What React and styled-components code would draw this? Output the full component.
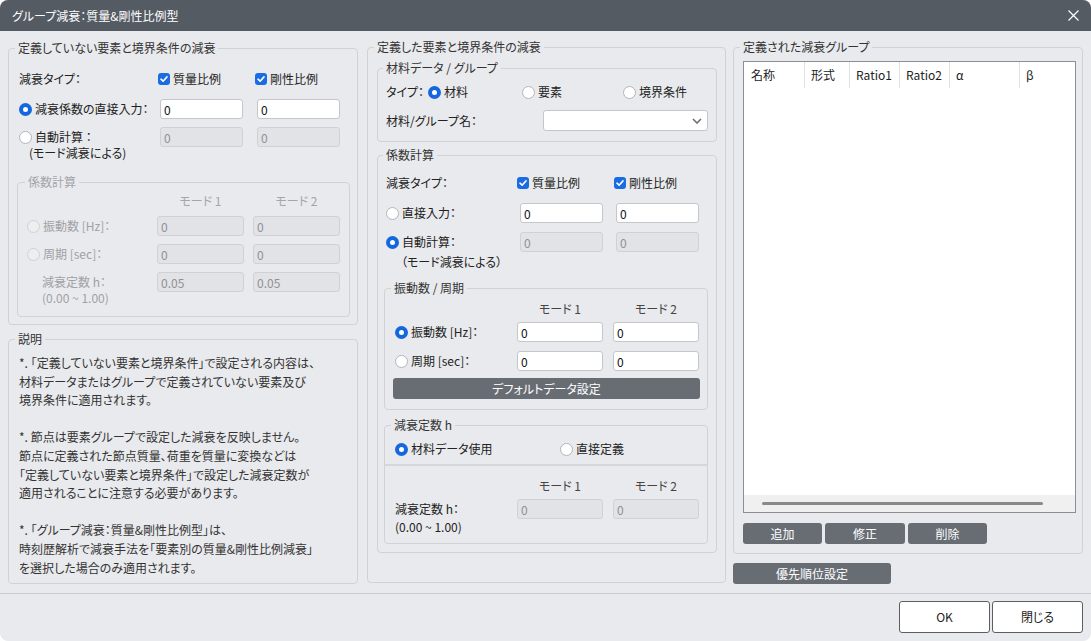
import React from "react";
import styled, { createGlobalStyle } from "styled-components";

const BG = "#e9eaed";
const LINE = "#d0d2d6";

const GlobalStyle = createGlobalStyle`
  *, *::before, *::after { box-sizing: border-box; }
  html, body { margin: 0; padding: 0; background: #ffffff; }
  body {
    font-family: "Noto Sans CJK JP", "Noto Sans", sans-serif;
    font-size: 12px;
    line-height: 16px;
    color: #222;
    font-feature-settings: "palt";
  }
`;

const Dialog = styled.div`
  width: 1091px;
  height: 641px;
  background: ${BG};
  border-radius: 8px;
  overflow: hidden;
  display: flex;
  flex-direction: column;
`;

const TitleBar = styled.header`
  flex: none;
  height: 31px;
  background: #555b63;
  color: #fff;
  display: flex;
  align-items: center;
  justify-content: space-between;
  padding: 0 12px;
  font-size: 12px;
`;

const CloseButton = styled.button`
  border: 0;
  background: transparent;
  padding: 0;
  width: 11px;
  height: 11px;
  display: flex;
  color: #fff;
`;

const Main = styled.main`
  flex: none;
  height: 563px;
  border-bottom: 1px solid #c9cbcf;
  display: flex;
  padding: 16px 8px 0 8px;
`;

const Column = styled.div`
  flex: none;
  width: ${(p) => p.$w}px;
  margin-left: ${(p) => p.$ml || 0}px;
  padding-top: ${(p) => p.$pt || 0}px;
  display: flex;
  flex-direction: column;
  align-items: flex-start;
`;

const Box = styled.section`
  flex: none;
  display: flex;
  flex-direction: column;
  align-items: flex-start;
  border: 1px solid ${LINE};
  border-radius: 4px;
  width: ${(p) => (p.$w ? `${p.$w}px` : "100%")};
  height: ${(p) => p.$h}px;
  margin: ${(p) => p.$m || "0"};
  padding: ${(p) => p.$p || "0"};
`;

const Legend = styled.div`
  flex: none;
  margin: -9px 0 0 ${(p) => p.$x || 0}px;
  padding: 0 3px;
  height: 16px;
  line-height: 16px;
  background: ${BG};
  white-space: nowrap;
  color: ${(p) => (p.$disabled ? "#a2a5aa" : "#333")};
`;

const Row = styled.div`
  flex: none;
  display: grid;
  grid-template-columns: ${(p) => p.$cols};
  align-items: ${(p) => p.$align || "center"};
  height: ${(p) => p.$h || 20}px;
  margin-top: ${(p) => p.$mt || 0}px;
  white-space: nowrap;
  color: ${(p) => (p.$disabled ? "#9ea1a6" : "#222")};
`;

const ModeHead = styled.div`
  width: ${(p) => p.$w}px;
  text-align: center;
  color: ${(p) => (p.$disabled ? "#a2a5aa" : "#444")};
`;

const Input = styled.input`
  width: ${(p) => p.$w}px;
  height: 20px;
  margin-left: ${(p) => p.$ml || 0}px;
  border: 1px solid ${(p) => (p.disabled ? "#cfd1d5" : "#c3c6cb")};
  border-radius: 3px;
  background: ${(p) => (p.disabled ? "#e1e3e6" : "#ffffff")};
  color: ${(p) => (p.disabled ? "#8e9196" : "#111")};
  font: inherit;
  line-height: 18px;
  padding: 0 3px;
  outline: none;
`;

const Choice = styled.label`
  display: inline-flex;
  align-items: center;
  gap: 3px;
  white-space: nowrap;
  line-height: ${(p) => p.$lh || 16}px;
  color: ${(p) => (p.$disabled ? "#9ea1a6" : "#222")};
`;

const RadioDot = styled.span`
  flex: none;
  width: 13px;
  height: 13px;
  border-radius: 50%;
  background: ${(p) => (p.$disabled ? "#eceef0" : "#ffffff")};
  border: ${(p) =>
    p.$on ? "4px solid #1467de" : `1px solid ${p.$disabled ? "#cfd1d4" : "#b2b5b9"}`};
`;

const CheckBoxMark = styled.span`
  flex: none;
  width: 12px;
  height: 12px;
  border-radius: 3px;
  background: #1a6ce2;
  display: flex;
  align-items: center;
  justify-content: center;
`;

const LabelStack = styled.div`
  display: flex;
  flex-direction: column;
  align-items: flex-start;
  padding-top: ${(p) => p.$pt || 0}px;
  color: ${(p) => (p.$disabled ? "#9ea1a6" : "#222")};
`;

const SubLine = styled.div`
  padding-left: ${(p) => p.$indent || 0}px;
  line-height: ${(p) => p.$lh || 16}px;
  white-space: nowrap;
`;

const Select = styled.div`
  width: 165px;
  height: 21px;
  background: #fff;
  border: 1px solid #c3c6cb;
  border-radius: 3px;
  display: flex;
  align-items: center;
  justify-content: flex-end;
  padding-right: 5px;
`;

const DarkButton = styled.button`
  flex: none;
  width: ${(p) => p.$w}px;
  height: 21px;
  margin: ${(p) => p.$m || "0"};
  border: 0;
  border-radius: 3px;
  background: #686d74;
  color: #fff;
  font: inherit;
  line-height: 21px;
  padding: 0;
`;

const ButtonRow = styled.div`
  display: flex;
  gap: 3px;
  margin-top: 10px;
`;

const Divided = styled.div`
  align-self: stretch;
  margin: 5px 0 0 -10px;
  padding-left: 10px;
  border-top: 2px solid #d5d7db;
  display: flex;
  flex-direction: column;
`;

const Notes = styled.div`
  margin-top: 7px;
  line-height: 18.6px;
  color: #333;
  white-space: nowrap;
`;

const NoteBlock = styled.p`
  margin: 0 0 18.6px 0;
  &:last-child { margin-bottom: 0; }
`;

const List = styled.div`
  flex: none;
  width: 333px;
  height: 452px;
  margin-top: 6px;
  background: #fff;
  border: 1px solid #8b8e93;
  display: flex;
  flex-direction: column;
`;

const ListHead = styled.div`
  display: grid;
  grid-template-columns: 61px 45px 50px 50px 70px 1fr;
  height: 26px;
`;

const HeadCell = styled.div`
  display: flex;
  align-items: center;
  padding-left: 6px;
  color: #222;
  border-right: 1px solid #e0e0e0;
  &:first-child { padding-left: 7px; }
  &:last-child { border-right: 0; }
`;

const ListBody = styled.div`
  flex: 1;
`;

const HScroll = styled.div`
  height: 17px;
  background: #f0f0f0;
  display: flex;
  align-items: center;
  padding: 0 32px 0 18px;
`;

const HThumb = styled.div`
  flex: 1;
  height: 3px;
  border-radius: 2px;
  background: #8a8a8a;
`;

const Footer = styled.footer`
  flex: 1;
  display: flex;
  justify-content: flex-end;
  align-items: flex-start;
  gap: 2px;
  padding: 7px 8px 0 0;
`;

const FooterButton = styled.button`
  width: 91px;
  height: 32px;
  background: #fff;
  border: 1px solid #5b5f64;
  border-radius: 3px;
  font: inherit;
  color: #222;
  padding: 0;
`;

function Radio({ on, disabled, children, lh }) {
  return (
    <Choice $disabled={disabled} $lh={lh}>
      <RadioDot $on={on} $disabled={disabled} />
      <span>{children}</span>
    </Choice>
  );
}

function Check({ children }) {
  return (
    <Choice>
      <CheckBoxMark>
        <svg width="10" height="10" viewBox="0 0 10 10">
          <path d="M2 5.2 L4.1 7.2 L8 2.9" fill="none" stroke="#fff" strokeWidth="1.6" strokeLinecap="round" strokeLinejoin="round" />
        </svg>
      </CheckBoxMark>
      <span>{children}</span>
    </Choice>
  );
}

const LEFT_SUB = "130px 96px 87px";
const MID_SUB = "122px 96px 86px";

export default function App() {
  return (
    <>
      <GlobalStyle />
      <Dialog>
        <TitleBar>
          <span>グループ減衰：質量&amp;剛性比例型</span>
          <CloseButton aria-label="close">
            <svg width="11" height="11" viewBox="0 0 11 11">
              <path d="M0.5 0.5 L10.5 10.5 M10.5 0.5 L0.5 10.5" stroke="#fff" strokeWidth="1.2" />
            </svg>
          </CloseButton>
        </TitleBar>

        <Main>
          {/* left column */}
          <Column $w={350} $pt={1}>
            <Box $h={277} $p="0 7px 0 10px">
              <Legend $x={-4}>定義していない要素と境界条件の減衰</Legend>
              <Row $cols="139px 97px 85px" $mt={13}>
                <span>減衰タイプ：</span>
                <Check>質量比例</Check>
                <Check>剛性比例</Check>
              </Row>
              <Row $cols="139px 97px 85px" $mt={10}>
                <Radio on>減衰係数の直接入力：</Radio>
                <Input $w={83} $ml={2} defaultValue="0" readOnly />
                <Input $w={83} $ml={2} defaultValue="0" readOnly />
              </Row>
              <Row $cols="139px 97px 85px" $mt={8} $h={34} $align="start">
                <LabelStack $pt={2}>
                  <Radio>自動計算 ：</Radio>
                  <SubLine $indent={10}>(モード減衰による)</SubLine>
                </LabelStack>
                <Input $w={83} $ml={2} defaultValue="0" disabled />
                <Input $w={83} $ml={2} defaultValue="0" disabled />
              </Row>

              <Box $w={333} $h={135} $m="21px 0 0 -2px" $p="0 0 0 9px">
                <Legend $x={-2} $disabled>係数計算</Legend>
                <Row $cols={LEFT_SUB} $mt={3} $h={16}>
                  <span />
                  <ModeHead $w={87} $disabled>モード 1</ModeHead>
                  <ModeHead $w={87} $disabled>モード 2</ModeHead>
                </Row>
                <Row $cols={LEFT_SUB} $mt={7} $disabled>
                  <Radio disabled>振動数 [Hz]：</Radio>
                  <Input $w={87} defaultValue="0" disabled />
                  <Input $w={87} defaultValue="0" disabled />
                </Row>
                <Row $cols={LEFT_SUB} $mt={8} $disabled>
                  <Radio disabled>周期 [sec]：</Radio>
                  <Input $w={87} defaultValue="0" disabled />
                  <Input $w={87} defaultValue="0" disabled />
                </Row>
                <Row $cols={LEFT_SUB} $mt={8} $h={34} $align="start">
                  <LabelStack $pt={2} $disabled>
                    <SubLine $indent={15}>減衰定数 h：</SubLine>
                    <SubLine $indent={15}>(0.00 ~ 1.00)</SubLine>
                  </LabelStack>
                  <Input $w={87} defaultValue="0.05" disabled />
                  <Input $w={87} defaultValue="0.05" disabled />
                </Row>
              </Box>
            </Box>

            <Box $h={245} $m="14px 0 0 0" $p="0 7px 0 10px">
              <Legend $x={-4}>説明</Legend>
              <Notes>
                <NoteBlock>
                  *. 「定義していない要素と境界条件」で設定される内容は、
                  <br />
                  材料データまたはグループで定義されていない要素及び
                  <br />
                  境界条件に適用されます。
                </NoteBlock>
                <NoteBlock>
                  *. 節点は要素グループで設定した減衰を反映しません。
                  <br />
                  節点に定義された節点質量、荷重を質量に変換などは
                  <br />
                  「定義していない要素と境界条件」で設定した減衰定数が
                  <br />
                  適用されることに注意する必要があります。
                </NoteBlock>
                <NoteBlock>
                  *. 「グループ減衰：質量&amp;剛性比例型」は、
                  <br />
                  時刻歴解析で減衰手法を「要素別の質量&amp;剛性比例減衰」
                  <br />
                  を選択した場合のみ適用されます。
                </NoteBlock>
              </Notes>
            </Box>
          </Column>

          {/* middle column */}
          <Column $w={359} $ml={9}>
            <Box $h={536} $p="0 8px 0 9px">
              <Legend $x={-3}>定義した要素と境界条件の減衰</Legend>

              <Box $h={74} $m="13px 0 0 0" $p="0 8px 0 8px">
                <Legend $x={-3}>材料データ / グループ</Legend>
                <Row $cols="42px 94px 101px 1fr" $mt={6}>
                  <span>タイプ：</span>
                  <Radio on>材料</Radio>
                  <Radio>要素</Radio>
                  <Radio>境界条件</Radio>
                </Row>
                <Row $cols="157px 165px" $mt={8} $h={21}>
                  <span>材料/グループ名：</span>
                  <Select>
                    <svg width="10" height="6" viewBox="0 0 10 6">
                      <path d="M1 1 L5 5 L9 1" fill="none" stroke="#6b6e73" strokeWidth="1.6" />
                    </svg>
                  </Select>
                </Row>
              </Box>

              <Box $h={398} $m="13px 0 0 0" $p="0 8px 0 8px">
                <Legend $x={-3}>係数計算</Legend>
                <Row $cols="131px 97px 1fr" $mt={10}>
                  <span>減衰タイプ：</span>
                  <Check>質量比例</Check>
                  <Check>剛性比例</Check>
                </Row>
                <Row $cols="131px 97px 1fr" $mt={10}>
                  <Radio>直接入力：</Radio>
                  <Input $w={83} $ml={3} defaultValue="0" readOnly />
                  <Input $w={83} $ml={2} defaultValue="0" readOnly />
                </Row>
                <Row $cols="131px 97px 1fr" $mt={9} $h={39} $align="start">
                  <LabelStack>
                    <Radio on lh={20}>自動計算：</Radio>
                    <SubLine $indent={15} $lh={20}>（モード減衰による）</SubLine>
                  </LabelStack>
                  <Input $w={83} $ml={3} defaultValue="0" disabled />
                  <Input $w={83} $ml={2} defaultValue="0" disabled />
                </Row>

                <Box $w={324} $h={122} $m="17px 0 0 -2px" $p="0 0 0 10px">
                  <Legend $x={-4}>振動数 / 周期</Legend>
                  <Row $cols={MID_SUB} $mt={5} $h={16}>
                    <span />
                    <ModeHead $w={86}>モード 1</ModeHead>
                    <ModeHead $w={86}>モード 2</ModeHead>
                  </Row>
                  <Row $cols={MID_SUB} $mt={5}>
                    <Radio on>振動数 [Hz]：</Radio>
                    <Input $w={86} defaultValue="0" readOnly />
                    <Input $w={86} defaultValue="0" readOnly />
                  </Row>
                  <Row $cols={MID_SUB} $mt={9}>
                    <Radio>周期 [sec]：</Radio>
                    <Input $w={86} defaultValue="0" readOnly />
                    <Input $w={86} defaultValue="0" readOnly />
                  </Row>
                  <DarkButton $w={307} $m="7px 0 0 -2px">デフォルトデータ設定</DarkButton>
                </Box>

                <Box $w={324} $h={119} $m="15px 0 0 -2px" $p="0 0 0 10px">
                  <Legend $x={-4}>減衰定数 h</Legend>
                  <Row $cols="165px 1fr" $mt={6}>
                    <Radio on>材料データ使用</Radio>
                    <Radio>直接定義</Radio>
                  </Row>
                  <Divided>
                    <Row $cols={MID_SUB} $mt={12} $h={16}>
                      <span />
                      <ModeHead $w={86}>モード 1</ModeHead>
                      <ModeHead $w={86}>モード 2</ModeHead>
                    </Row>
                    <Row $cols={MID_SUB} $mt={5} $h={36} $align="start">
                      <LabelStack $pt={1}>
                        <SubLine $lh={18}>減衰定数 h：</SubLine>
                        <SubLine $lh={18}>(0.00 ~ 1.00)</SubLine>
                      </LabelStack>
                      <Input $w={86} defaultValue="0" disabled />
                      <Input $w={86} defaultValue="0" disabled />
                    </Row>
                  </Divided>
                </Box>
              </Box>
            </Box>
          </Column>

          {/* right column */}
          <Column $w={350} $ml={7}>
            <Box $h={507} $p="0 6px 0 9px">
              <Legend $x={-3}>定義された減衰グループ</Legend>
              <List>
                <ListHead>
                  <HeadCell>名称</HeadCell>
                  <HeadCell>形式</HeadCell>
                  <HeadCell>Ratio1</HeadCell>
                  <HeadCell>Ratio2</HeadCell>
                  <HeadCell>α</HeadCell>
                  <HeadCell>β</HeadCell>
                </ListHead>
                <ListBody />
                <HScroll>
                  <HThumb />
                </HScroll>
              </List>
              <ButtonRow>
                <DarkButton $w={79}>追加</DarkButton>
                <DarkButton $w={80}>修正</DarkButton>
                <DarkButton $w={79}>削除</DarkButton>
              </ButtonRow>
            </Box>
            <DarkButton $w={158} $m="9px 0 0 0">優先順位設定</DarkButton>
          </Column>
        </Main>

        <Footer>
          <FooterButton>OK</FooterButton>
          <FooterButton>閉じる</FooterButton>
        </Footer>
      </Dialog>
    </>
  );
}
